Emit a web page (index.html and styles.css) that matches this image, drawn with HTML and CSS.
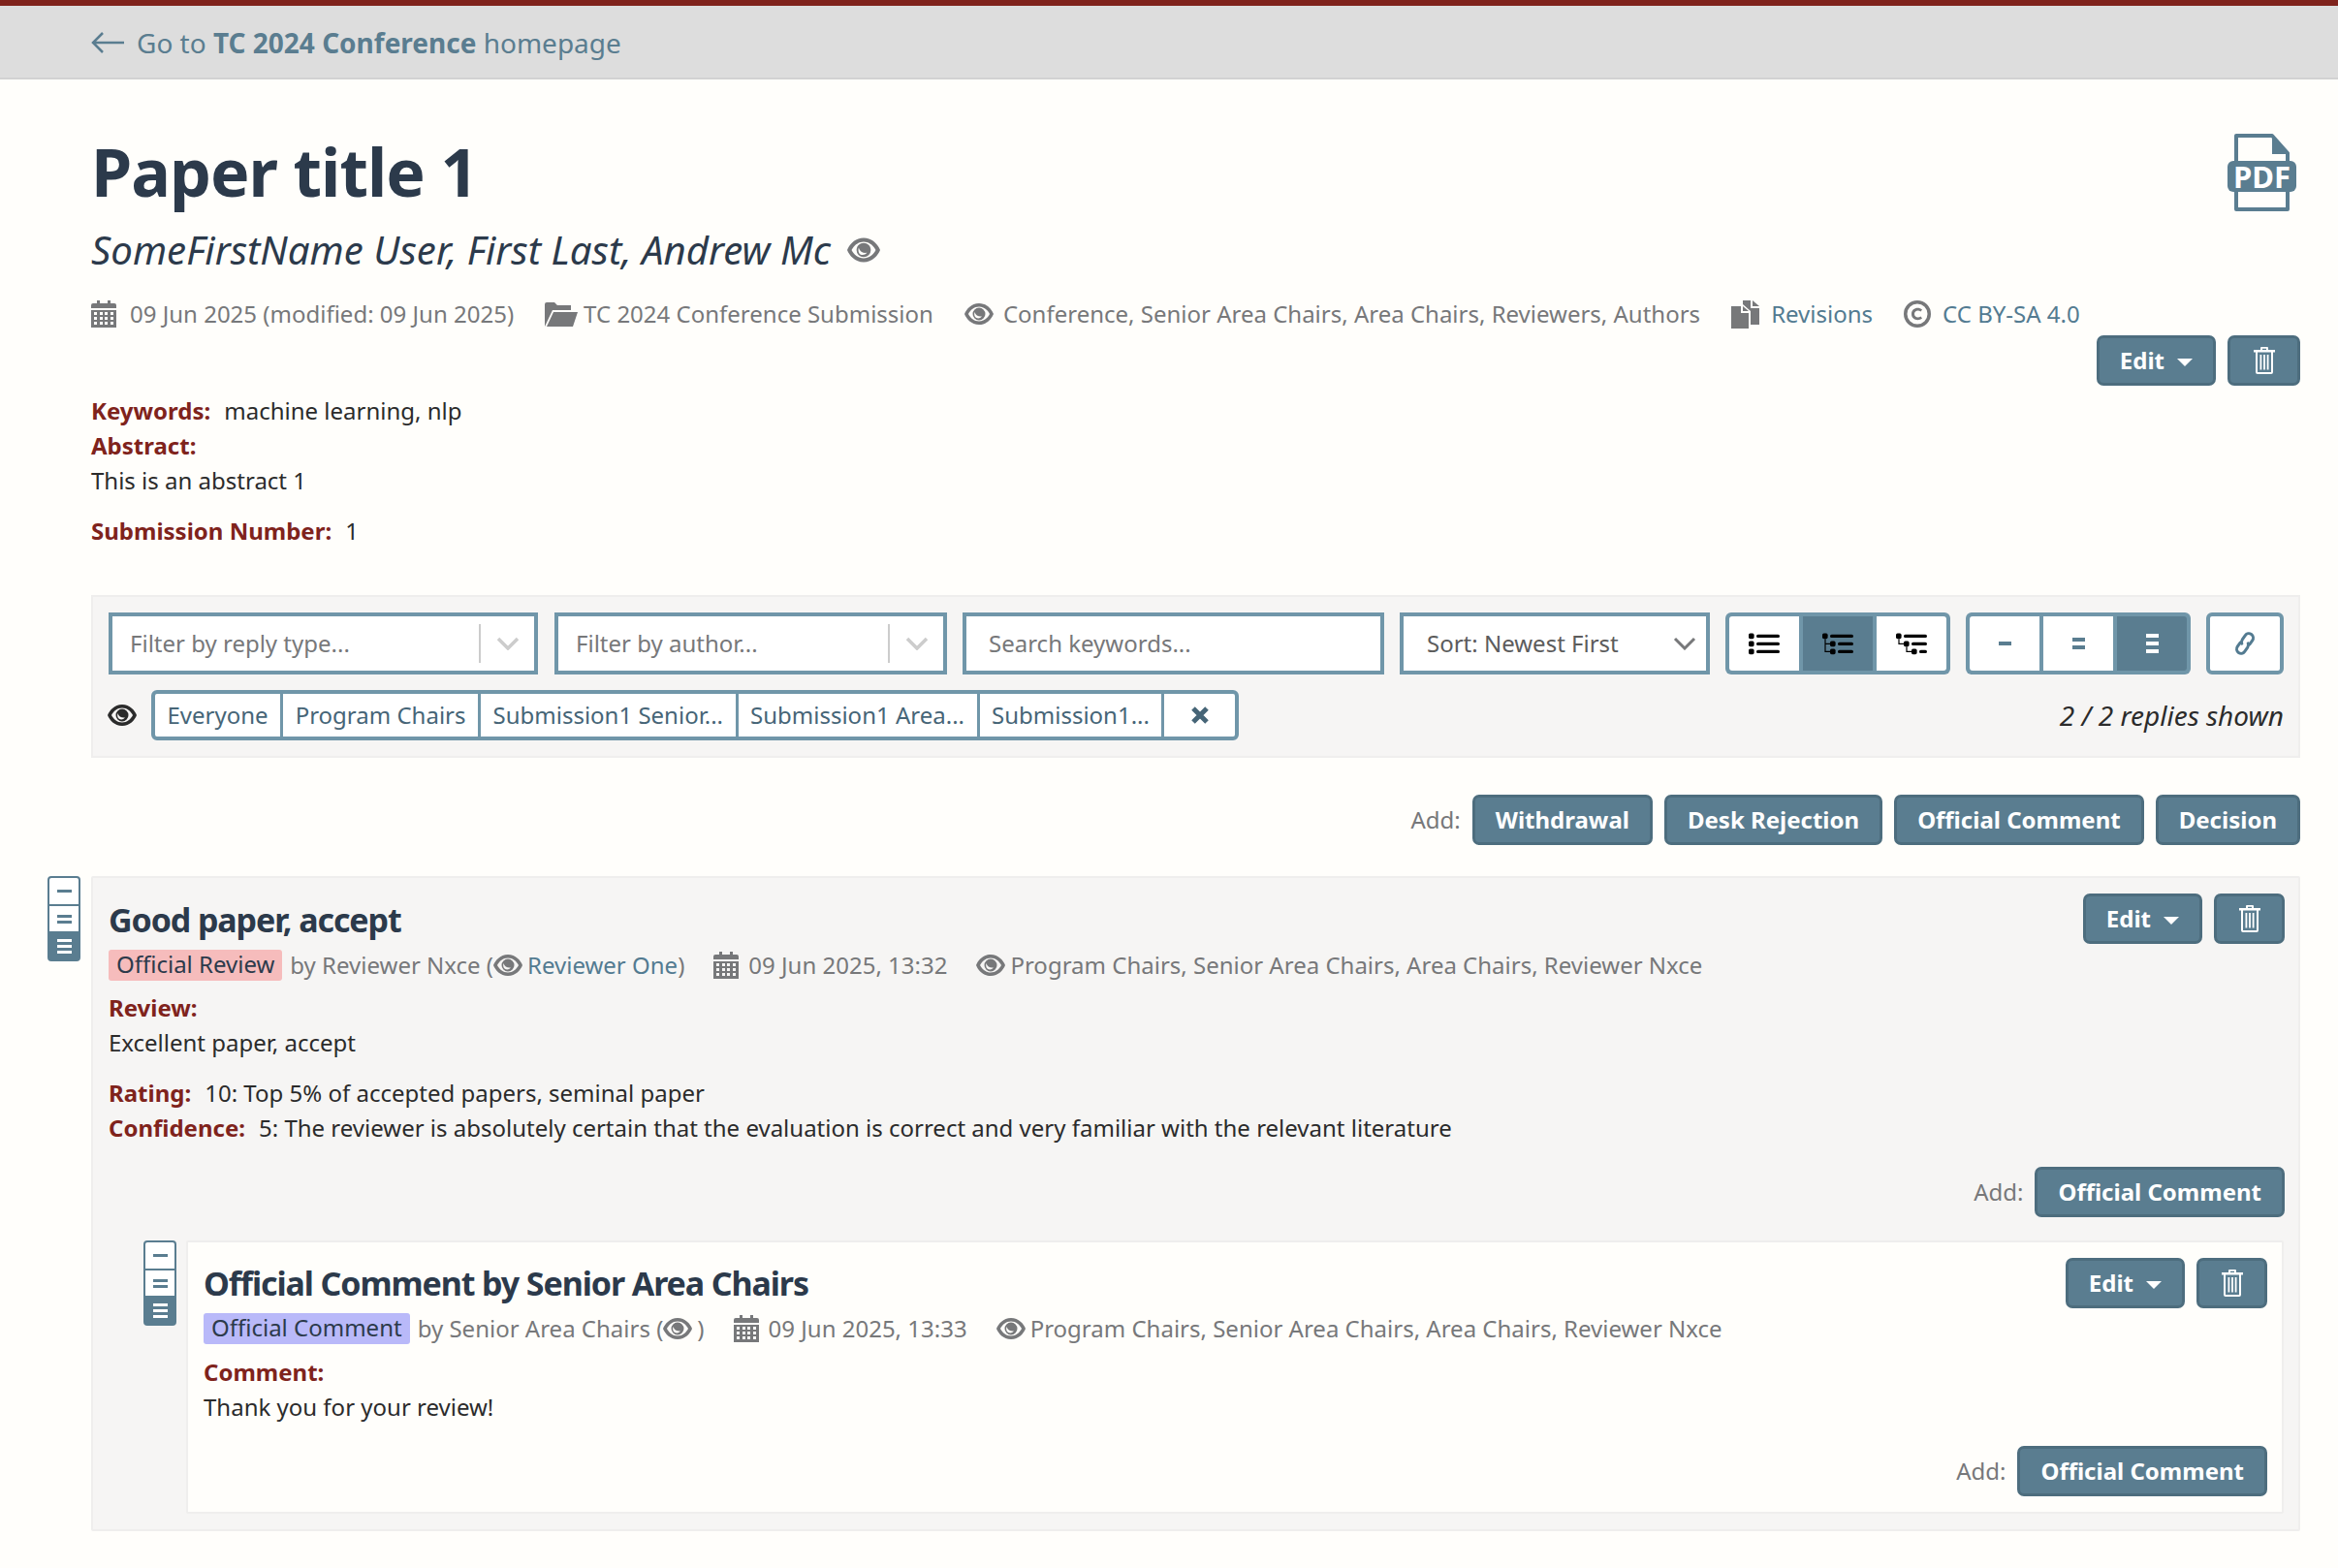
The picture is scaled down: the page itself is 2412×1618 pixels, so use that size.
FILE: index.html
```html
<!DOCTYPE html>
<html lang="en">
<head>
    <meta charset="UTF-8">
    <meta name="viewport" content="width=device-width, initial-scale=1.0">
    <title>Paper title 1</title>
    <link rel="stylesheet" href="styles.css">
</head>
<body>
    <svg class="sprites" aria-hidden="true">
        <symbol id="i-eye" viewBox="0 0 30 22"><path fill-rule="evenodd" d="M15 0C7 0 2 6 0 11c2 5 7 11 15 11s13-6 15-11C28 6 23 0 15 0zm0 3.500c5 0 9 3.500 11 7.500-2 4-6 7.500-11 7.500S6 15 4 11C6 7 10 3.500 15 3.500z"/><path fill-rule="evenodd" d="M15 4.500a6.500 6.500 0 1 0 0 13 6.500 6.500 0 0 0 0-13zM10.500 9c1 3.500 4 5 7.500 4.500-2 2.500-5.500 2.500-7 .5-1-1.500-1-3.500-.5-5z"/></symbol>
        <symbol id="i-cal" viewBox="0 0 26 28"><path d="M0 5q0-2 2-2h4V0h3v3h8V0h3v3h4q2 0 2 2v3H0z"/><path fill-rule="evenodd" d="M0 10h26v18H0zM3 12v3h3v-3zm6 0v3h3v-3zm5 0v3h3v-3zm6 0v3h3v-3zM3 17v3h3v-3zm6 0v3h3v-3zm5 0v3h3v-3zm6 0v3h3v-3zM3 22v3h3v-3zm6 0v3h3v-3zm5 0v3h3v-3zm6 0v3h3v-3z"/></symbol>
        <symbol id="i-folder" viewBox="0 0 34 26"><path d="M0 26V3q0-2 2-2h8l3 3h14v5H8z"/><path d="M9 11h25l-5 15H2z"/></symbol>
        <symbol id="i-files" viewBox="0 0 29 29"><path d="M0 6h10v7h8v16H0z"/><path d="M12 6l6 5h-6z"/><path d="M12 0h8v8h9v17h-9V11l-8-7z"/><path d="M22 0l7 6h-7z"/></symbol>
        <symbol id="i-cc" viewBox="0 0 28 28"><path fill-rule="evenodd" d="M14 0a14 14 0 1 0 0 28 14 14 0 0 0 0-28zm0 3.500a10.500 10.500 0 1 1 0 21 10.500 10.500 0 0 1 0-21z"/><path d="M19 9.500 17.500 11.500C15 9.500 11 10.500 11 14s4 4.500 6.500 2.500L19 18.500c-4 3.500-11 1.500-11-4.500S15 6 19 9.500z"/></symbol>
        <symbol id="i-trash" viewBox="0 0 22 28"><path fill-rule="evenodd" d="M7 3V1q0-1 1-1h6q1 0 1 1v2h7v2.500h-2V26q0 2-2 2H4q-2 0-2-2V5.500H0V3zm2 0h4V1.800H9zM4 5.500V26h14V5.500z"/><path d="M6.500 8h1.800v15.500H6.500zm3.600 0h1.800v15.500h-1.800zm3.600 0h1.800v15.500h-1.800z"/></symbol>
        <symbol id="i-link" viewBox="0 0 24 30"><g transform="rotate(-55 12 15)" fill="none" stroke="currentColor" stroke-width="3" stroke-linecap="round"><path d="M10 10.500H5a4.500 4.500 0 0 0 0 9h5.500a4.500 4.500 0 0 0 3.500-2"/><path d="M14 19.500h5a4.500 4.500 0 0 0 0-9h-5.500a4.500 4.500 0 0 0-3.500 2"/></g></symbol>
        <symbol id="i-flat" viewBox="0 0 40 32"><rect x="0" y="3" width="7" height="7" rx="2"/><rect x="0" y="13" width="7" height="7" rx="2"/><rect x="0" y="23" width="7" height="7" rx="2"/><rect x="10" y="4.500" width="30" height="4" rx="2"/><rect x="10" y="14.500" width="30" height="4" rx="2"/><rect x="10" y="24.500" width="30" height="4" rx="2"/></symbol>
        <symbol id="i-tree" viewBox="0 0 40 32"><rect x="0" y="3" width="7" height="7" rx="2"/><rect x="10" y="4.500" width="30" height="4" rx="2"/><rect x="10" y="13" width="7" height="7" rx="2"/><rect x="20" y="14.500" width="20" height="4" rx="2"/><rect x="10" y="23" width="7" height="7" rx="2"/><rect x="20" y="24.500" width="20" height="4" rx="2"/><path d="M3 10h1.500v15.800H10v1.500H3zM4.500 15.800H10v1.500H4.500z"/></symbol>
        <symbol id="i-nest" viewBox="0 0 40 32"><rect x="0" y="3" width="7" height="7" rx="2"/><rect x="10" y="4.500" width="30" height="4" rx="2"/><rect x="10" y="13" width="7" height="7" rx="2"/><rect x="20" y="14.500" width="20" height="4" rx="2"/><rect x="20" y="23" width="7" height="7" rx="2"/><rect x="30" y="24.500" width="10" height="4" rx="2"/><path d="M3 10h1.500v5.800H10v1.500H3zM13 20h1.500v5.800H20v1.500h-7z"/></symbol>
    </svg>

    <div class="topline"></div>
    <nav class="crumb">
        <a href="#"><svg class="back" viewBox="0 0 34 24"><path d="M12 2 2 12l10 10M2 12h32" fill="none" stroke="currentColor" stroke-width="2.500"/></svg>Go to <b>TC 2024 Conference</b> homepage</a>
    </nav>

    <main class="container">
        <header class="paper-head">
            <div class="paper-title-row">
                <div>
                    <h1>Paper title 1</h1>
                    <div class="authors">SomeFirstName User, First Last, Andrew Mc <svg class="ico eye-big"><use href="#i-eye"/></svg></div>
                </div>
                <div class="pdf">
                    <svg class="pdf-file" viewBox="0 0 71 80"><path d="M9 2H46L62 20V78H9z" fill="none" stroke="#5a7d90" stroke-width="4" stroke-linejoin="round"/><path d="M46 2 64 21H46z" fill="#5a7d90"/></svg>
                    <span class="pdf-tag">PDF</span>
                </div>
            </div>
            <div class="meta">
                <span class="meta-item"><svg class="ico cal"><use href="#i-cal"/></svg>09 Jun 2025 (modified: 09 Jun 2025)</span>
                <span class="meta-item"><svg class="ico folder"><use href="#i-folder"/></svg>TC 2024 Conference Submission</span>
                <span class="meta-item"><svg class="ico eye"><use href="#i-eye"/></svg>Conference, Senior Area Chairs, Area Chairs, Reviewers, Authors</span>
                <span class="meta-item"><svg class="ico files"><use href="#i-files"/></svg><a href="#">Revisions</a></span>
                <span class="meta-item"><svg class="ico cc"><use href="#i-cc"/></svg><a href="#">CC BY-SA 4.0</a></span>
            </div>
            <div class="actions">
                <button class="btn">Edit <span class="caret"></span></button>
                <button class="btn btn-icon"><svg class="ico trash"><use href="#i-trash"/></svg></button>
            </div>
        </header>

        <section class="details">
            <div><strong>Keywords:</strong><span class="val">machine learning, nlp</span></div>
            <div><strong>Abstract:</strong></div>
            <p>This is an abstract 1</p>
            <div class="sub-num"><strong>Submission Number:</strong><span class="val">1</span></div>
        </section>

        <section class="filters">
            <div class="filter-row">
                <div class="field select w-type"><span class="ph">Filter by reply type...</span><i class="sep"></i><svg class="chev" viewBox="0 0 24 14"><path d="M2 2l10 10L22 2" fill="none" stroke="currentColor" stroke-width="3.500"/></svg></div>
                <div class="field select w-author"><span class="ph">Filter by author...</span><i class="sep"></i><svg class="chev" viewBox="0 0 24 14"><path d="M2 2l10 10L22 2" fill="none" stroke="currentColor" stroke-width="3.500"/></svg></div>
                <div class="field w-search"><span class="ph">Search keywords...</span></div>
                <div class="field w-sort"><span class="sort-label">Sort: Newest First</span><svg class="chev dark" viewBox="0 0 24 14"><path d="M2 2l10 10L22 2" fill="none" stroke="currentColor" stroke-width="3"/></svg></div>
                <div class="group">
                    <button class="g-btn"><svg class="list-ico"><use href="#i-flat"/></svg></button>
                    <button class="g-btn on"><svg class="list-ico"><use href="#i-tree"/></svg></button>
                    <button class="g-btn"><svg class="list-ico"><use href="#i-nest"/></svg></button>
                </div>
                <div class="group">
                    <button class="g-btn"><span class="bars"><i></i></span></button>
                    <button class="g-btn"><span class="bars"><i></i><i></i></span></button>
                    <button class="g-btn on"><span class="bars"><i></i><i></i><i></i></span></button>
                </div>
                <button class="link-btn"><svg class="link-ico"><use href="#i-link"/></svg></button>
            </div>
            <div class="filter-row second">
                <svg class="ico eye-dark"><use href="#i-eye"/></svg>
                <div class="chips">
                    <span class="chip">Everyone</span>
                    <span class="chip">Program Chairs</span>
                    <span class="chip">Submission1 Senior...</span>
                    <span class="chip">Submission1 Area...</span>
                    <span class="chip">Submission1...</span>
                    <span class="chip clear"><svg viewBox="0 0 20 20"><path d="M3 3l14 14M17 3 3 17" fill="none" stroke="currentColor" stroke-width="5"/></svg></span>
                </div>
                <span class="count">2 / 2 replies shown</span>
            </div>
        </section>

        <div class="add-row top-add">
            <span class="add-label">Add:</span>
            <button class="btn">Withdrawal</button>
            <button class="btn">Desk Rejection</button>
            <button class="btn">Official Comment</button>
            <button class="btn">Decision</button>
        </div>

        <article class="reply">
            <div class="collapse-btns">
                <span class="c-btn"><span class="bars"><i></i></span></span>
                <span class="c-btn"><span class="bars"><i></i><i></i></span></span>
                <span class="c-btn on"><span class="bars"><i></i><i></i><i></i></span></span>
            </div>
            <div class="reply-head">
                <div class="reply-text">
                    <h2>Good paper, accept</h2>
                    <div class="meta reply-meta">
                        <span class="badge review">Official Review</span>
                        <span class="by">by Reviewer Nxce (<svg class="ico eye"><use href="#i-eye"/></svg><a href="#">Reviewer One</a>)</span>
                        <span class="meta-item"><svg class="ico cal"><use href="#i-cal"/></svg>09 Jun 2025, 13:32</span>
                        <span class="meta-item"><svg class="ico eye"><use href="#i-eye"/></svg>Program Chairs, Senior Area Chairs, Area Chairs, Reviewer Nxce</span>
                    </div>
                </div>
                <div class="actions in-reply">
                    <button class="btn">Edit <span class="caret"></span></button>
                    <button class="btn btn-icon"><svg class="ico trash"><use href="#i-trash"/></svg></button>
                </div>
            </div>
            <div class="reply-body">
                <div><strong>Review:</strong></div>
                <p>Excellent paper, accept</p>
                <div class="rating"><strong>Rating:</strong><span class="val">10: Top 5% of accepted papers, seminal paper</span></div>
                <div><strong>Confidence:</strong><span class="val">5: The reviewer is absolutely certain that the evaluation is correct and very familiar with the relevant literature</span></div>
            </div>
            <div class="add-row reply-add">
                <span class="add-label">Add:</span>
                <button class="btn">Official Comment</button>
            </div>

            <article class="reply nested">
                <div class="collapse-btns">
                    <span class="c-btn"><span class="bars"><i></i></span></span>
                    <span class="c-btn"><span class="bars"><i></i><i></i></span></span>
                    <span class="c-btn on"><span class="bars"><i></i><i></i><i></i></span></span>
                </div>
                <div class="reply-head">
                    <div class="reply-text">
                        <h2>Official Comment by Senior Area Chairs</h2>
                        <div class="meta reply-meta">
                            <span class="badge comment">Official Comment</span>
                            <span class="by">by Senior Area Chairs (<svg class="ico eye"><use href="#i-eye"/></svg>)</span>
                            <span class="meta-item"><svg class="ico cal"><use href="#i-cal"/></svg>09 Jun 2025, 13:33</span>
                            <span class="meta-item"><svg class="ico eye"><use href="#i-eye"/></svg>Program Chairs, Senior Area Chairs, Area Chairs, Reviewer Nxce</span>
                        </div>
                    </div>
                    <div class="actions in-reply">
                        <button class="btn">Edit <span class="caret"></span></button>
                        <button class="btn btn-icon"><svg class="ico trash"><use href="#i-trash"/></svg></button>
                    </div>
                </div>
                <div class="reply-body">
                    <div><strong>Comment:</strong></div>
                    <p>Thank you for your review!</p>
                </div>
                <div class="add-row nested-add">
                    <span class="add-label">Add:</span>
                    <button class="btn">Official Comment</button>
                </div>
            </article>
        </article>
    </main>
</body>
</html>
```

FILE: styles.css
```css
* { box-sizing: border-box; }
html, body { margin: 0; padding: 0; }
body { font-family: "Noto Sans", sans-serif; font-size: 24px; line-height: 36px; background-color: #fffefb; color: #2b2b2b; }
a { color: #537b91; text-decoration: none; }
p { margin: 0; }
button { font-family: inherit; }
.sprites { display: none; }

.topline { height: 6px; background-color: #7f231c; }
.crumb { height: 76px; padding: 2px 0 0 94px; display: flex; align-items: center; background-color: #dddddd; border-bottom: 2px solid #d2d2d2; font-size: 28px; }
.crumb a { display: flex; align-items: center; white-space: pre; color: #5a7d90; }
.crumb b { font-weight: 700; }
.back { width: 34px; height: 24px; margin-right: 13px; }

.container { padding: 0 39px 0 94px; }

.paper-title-row { display: flex; justify-content: space-between; padding-top: 59px; }
h1 { margin: 0; font-size: 68px; line-height: 72px; font-weight: 700; letter-spacing: -1px; color: #2c3a4b; }
.authors { margin-top: 19px; font-size: 40.200px; line-height: 52px; font-style: italic; color: #2c3a4b; display: flex; align-items: center; white-space: pre; }
.eye-big { width: 34px; height: 26px; margin-left: 6px; color: #77787a; }
.pdf { position: relative; width: 71px; height: 80px; margin: -3px 4px 0 0; }
.pdf-file { display: block; width: 71px; height: 80px; }
.pdf-tag { position: absolute; left: 0; top: 28px; width: 71px; height: 32px; background-color: #5a7d90; border-radius: 6px; color: #fff; font-size: 31px; line-height: 32px; font-weight: 700; text-align: center; }

.ico { fill: currentColor; flex: none; vertical-align: middle; }
.meta { display: flex; align-items: center; color: #77787a; white-space: nowrap; }
.meta-item { display: flex; align-items: center; }
.paper-head .meta { margin-top: 22px; height: 36px; gap: 32px; }
.cal { width: 26px; height: 28px; margin-right: 14px; }
.folder { width: 34px; height: 26px; margin-right: 6px; }
.eye { width: 30px; height: 22px; margin-right: 10px; }
.files { width: 29px; height: 29px; margin-right: 12px; }
.cc { width: 28px; height: 28px; margin-right: 12px; }
.trash { width: 22px; height: 28px; }

.actions { display: flex; justify-content: flex-end; gap: 12px; margin-top: 4px; }
.btn { height: 52px; padding: 0 21px; background-color: #5a7d90; border: 3px solid #4d6d7e; border-radius: 7px; color: #fff; font-size: 24px; font-weight: 700; line-height: 1; display: flex; align-items: center; justify-content: center; }
.btn-icon { width: 75px; padding: 0; }
.caret { width: 0; height: 0; margin-left: 13px; border-left: 8px solid transparent; border-right: 8px solid transparent; border-top: 8px solid #fff; margin-top: 4px; }

.details { margin-top: 8px; }
strong { color: #7f231c; font-weight: 700; }
.val { margin-left: 14px; }
.sub-num { margin-top: 16px; }

.filters { margin-top: 48px; height: 168px; padding: 16px 15px 0 16px; background-color: #f6f5f4; border: 2px solid #efeeed; }
.filter-row { display: flex; gap: 16px; }
.field { height: 64px; background-color: #fff; border: 4px solid #7096a9; display: flex; align-items: center; padding-left: 18px; flex: none; }
.w-type { width: 443px; margin-right: 1px; }
.w-author { width: 405px; }
.w-search { width: 435px; padding-left: 23px; }
.w-sort { width: 320px; padding-left: 24px; }
.ph { color: #77787a; flex: 1; }
.sort-label { color: #5c5c5c; flex: 1; }
.sep { width: 2px; height: 40px; background-color: #cccccc; }
.chev { width: 24px; height: 14px; margin: 0 15px 0 16px; color: #cccccc; flex: none; }
.chev.dark { color: #77787a; margin: 0 10px 0 0; }
.group { display: flex; height: 64px; padding: 4px; gap: 4px; border-radius: 6px; background-color: #7096a9; flex: none; }
.g-btn { width: 72px; height: 56px; padding: 0; margin: 0; border: 0; background-color: #fff; display: flex; align-items: center; justify-content: center; color: #5a7d90; }
.g-btn:first-child { border-radius: 3px 0 0 3px; }
.g-btn:last-child { border-radius: 0 3px 3px 0; }
.g-btn.on { background-color: #5a7d90; color: #fff; }
.list-ico { width: 32px; height: 26px; fill: #000; }
.bars { display: flex; flex-direction: column; gap: 4px; width: 13px; }
.bars i { display: block; height: 4px; background-color: currentColor; }
.link-btn { width: 80px; height: 64px; padding: 0; background-color: #fff; border: 4px solid #7096a9; border-radius: 6px; display: flex; align-items: center; justify-content: center; color: #537b91; flex: none; }
.link-ico { width: 24px; height: 30px; color: #537b91; }

.filter-row.second { margin-top: 16px; align-items: center; gap: 0; height: 52px; }
.eye-dark { width: 30px; height: 24px; color: #2b2b2b; margin: 0 15px 0 -1px; }
.chips { display: flex; height: 52px; background-color: #fff; border: 4px solid #7096a9; border-radius: 6px; }
.chip { display: flex; align-items: center; padding: 0 12.500px; color: #466577; border-left: 3px solid #7096a9; }
.chip:first-child { border-left: 0; }
.chip.clear { width: 76px; justify-content: center; color: #466577; }
.chip.clear svg { width: 20px; height: 20px; }
.count { margin-left: auto; font-style: italic; color: #2b2b2b; font-size: 28px; }

.add-row { display: flex; justify-content: flex-end; align-items: center; gap: 12px; }
.add-label { color: #77787a; }
.top-add { margin-top: 38px; }

.reply { position: relative; background-color: #f6f5f4; border: 2px solid #efeeed; border-radius: 2px; padding: 19px 14px 16px 16px; margin-top: 32px; }
.collapse-btns { position: absolute; left: -47px; top: -2px; width: 34px; height: 88px; display: flex; flex-direction: column; border: 2px solid #5a7d90; border-radius: 4px; background-color: #fff; }
.c-btn { flex: 1; display: flex; align-items: center; justify-content: center; color: #5a7d90; border-bottom: 2px solid #5a7d90; }
.c-btn.on { background-color: #5a7d90; color: #fff; border-bottom: 0; }
.c-btn .bars { width: 15px; gap: 3px; }
.c-btn .bars i { height: 3px; }
.reply-head { display: flex; justify-content: space-between; }
h2 { margin: 0; font-size: 34px; line-height: 48px; font-weight: 700; letter-spacing: -1.100px; color: #2c3a4b; }
.reply-meta { margin-top: 5px; height: 36px; }
.reply-meta .meta-item { margin-left: 30px; }
.reply-meta .cal { margin-right: 10px; }
.reply-meta .meta-item .eye { margin-right: 5px; }
.badge { display: inline-block; height: 32px; line-height: 30px; padding: 0 8px; border-radius: 3px; color: #2c3a4b; margin-right: 8px; }
.badge.review { background-color: #f6bcbc; }
.badge.comment { background-color: #b9b9f9; }
.by { display: inline-flex; align-items: center; white-space: pre; }
.by .eye { margin-right: 5px; }
.in-reply { margin-top: -3px; }
.in-reply .btn-icon { width: 73px; }
.reply-body { margin-top: 8px; }
.rating { margin-top: 16px; }
.reply-add { margin-top: 22px; }

.nested { background-color: #fffefb; margin: 24px 1px 0 80px; padding: 18px 15px 16px 16px; }
.nested .collapse-btns { left: -46px; }
.nested .in-reply { margin-top: -2px; }
.nested .reply-body { margin-top: 9px; }
.nested-add { margin-top: 22px; }
```
